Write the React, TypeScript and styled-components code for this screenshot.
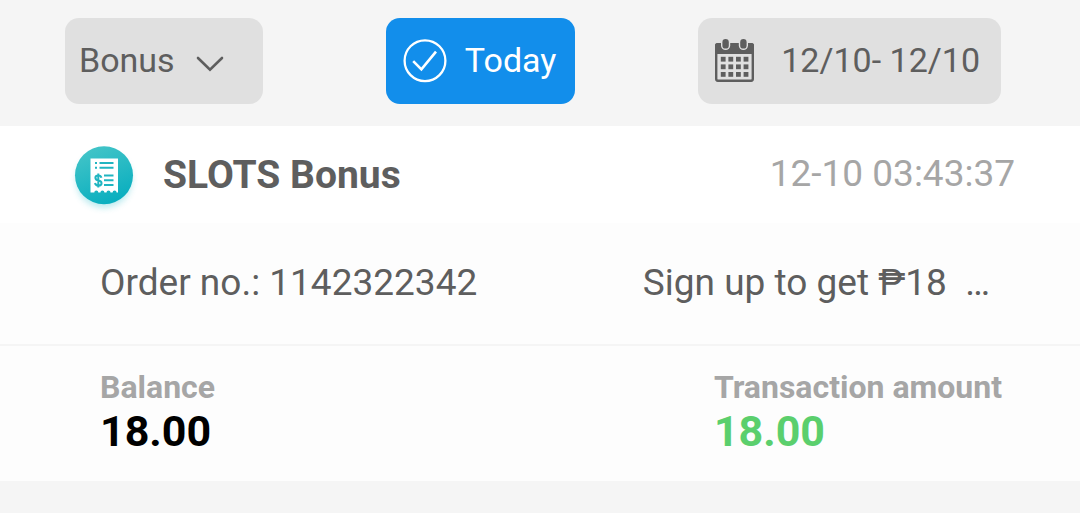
import React from "react";
import styled, { createGlobalStyle } from "styled-components";

const GlobalStyle = createGlobalStyle`
  *, *::before, *::after { box-sizing: border-box; }
  body {
    margin: 0;
    background: #f5f5f5;
    color: #5e5e5e;
    font-family: Roboto, "Liberation Sans", sans-serif;
  }
  button, select { font: inherit; color: inherit; }
  h2, p, dl, dd { margin: 0; }
`;

const Filters = styled.form`
  display: flex;
  justify-content: space-between;
  padding: 18px 79px 22px 65px;
  font-size: 34px;
  line-height: 42px;
`;

const SelectBox = styled.div`
  display: grid;
  align-items: center;
  width: 198px;
  height: 86px;
  border-radius: 14px;
  background: #e0e0e0;

  & > * { grid-area: 1 / 1; }
  & > svg {
    justify-self: end;
    margin-right: 39px;
    margin-top: 6px;
    pointer-events: none;
  }
`;

const Select = styled.select`
  appearance: none;
  width: 100%;
  height: 100%;
  padding: 0 0 2px 14px;
  border: 0;
  border-radius: 14px;
  background: transparent;
`;

const FilterButton = styled.button<{ $active?: boolean; $gap: number; $end: number }>`
  display: flex;
  align-items: center;
  gap: ${(p) => p.$gap}px;
  height: 86px;
  padding: 0 ${(p) => p.$end}px 0 17px;
  border: 0;
  border-radius: 14px;
  background: ${(p) => (p.$active ? "#128eeb" : "#e0e0e0")};
  color: ${(p) => (p.$active ? "#ffffff" : "inherit")};
  white-space: nowrap;
`;

const ButtonText = styled.span`
  padding-bottom: 2px;
`;

const Record = styled.article`
  background: #fdfdfd;
`;

const RecordHeader = styled.header`
  display: flex;
  align-items: center;
  height: 97px;
  padding: 0 65px;
  background: #ffffff;
`;

const Title = styled.h2`
  flex: 1;
  margin-left: 20px;
  font-size: 39px;
  font-weight: 700;
  line-height: 44px;
`;

const Time = styled.time`
  padding-bottom: 2px;
  color: #a6a6a6;
  font-size: 37px;
  line-height: 44px;
`;

const Details = styled.div`
  display: flex;
  justify-content: space-between;
  padding: 38px 90px 39px 100px;
  border-bottom: 2px solid #f5f5f5;
  font-size: 37px;
  line-height: 44px;
`;

const Note = styled.p`
  white-space: pre;
`;

const Amounts = styled.dl`
  display: flex;
  justify-content: space-between;
  padding: 21px 78px 26px 100px;
`;

const AmountLabel = styled.dt`
  color: #a6a6a6;
  font-size: 32px;
  font-weight: 700;
  line-height: 40px;
`;

const AmountValue = styled.dd<{ $credit?: boolean }>`
  color: ${(p) => (p.$credit ? "#5bcf6d" : "#000000")};
  font-size: 43px;
  font-weight: 700;
  line-height: 48px;
`;

const Chevron = () => (
  <svg width="28" height="16" viewBox="0 0 28 16" fill="none" stroke="#5e5e5e" strokeWidth="2.6" strokeLinecap="round" aria-hidden="true">
    <path d="M2 2 14 13.8 26 2" />
  </svg>
);

const CheckCircle = () => (
  <svg width="44" height="44" viewBox="0 0 44 44" fill="none" stroke="#fff" strokeWidth="2.3" aria-hidden="true">
    <circle cx="22" cy="21.7" r="20.4" />
    <path d="M10.2 22.2 18.4 30.4 33 12.7" strokeWidth="2.6" />
  </svg>
);

const cells = [0, 1, 2].flatMap((r) => [0, 1, 2, 3].map((c) => [r, c]));

const CalendarIcon = () => (
  <svg width="39" height="44" viewBox="0 0 39 44" aria-hidden="true">
    <rect x="1.2" y="5.3" width="36.6" height="36.4" rx="1.6" fill="none" stroke="#5e5e5e" strokeWidth="2.4" />
    <path d="M0 15V6.5Q0 4 2.5 4h34Q39 4 39 6.5V15z" fill="#5e5e5e" />
    {[10.6, 28.4].map((x) => (
      <g key={x}>
        <rect x={x - 4.6} y="-1.4" width="9.2" height="12.4" rx="4.6" fill="#e0e0e0" />
        <rect x={x - 3.2} y="0" width="6.4" height="9.6" rx="3.2" fill="#5e5e5e" />
      </g>
    ))}
    {cells.map(([r, c]) => (
      <rect key={`${r}-${c}`} x={5.8 + c * 7.6} y={17.8 + r * 7.6} width="4.8" height="4.8" fill="#5e5e5e" />
    ))}
  </svg>
);

const ReceiptIcon = () => (
  <svg width="78" height="78" viewBox="0 0 78 78" aria-hidden="true">
    <defs>
      <linearGradient id="badge" x1="0.2" y1="0" x2="0.6" y2="1">
        <stop offset="0" stopColor="#45c5c8" />
        <stop offset="1" stopColor="#08aebf" />
      </linearGradient>
      <filter id="glow" x="-30%" y="-30%" width="160%" height="160%">
        <feGaussianBlur stdDeviation="3" />
      </filter>
    </defs>
    <circle cx="39" cy="44" r="28" fill="#3cc4d0" opacity="0.35" filter="url(#glow)" />
    <circle cx="39" cy="39.3" r="29" fill="url(#badge)" />
    <path
      d="M25.5 22.5h27.5v34h-1.4a2 2 0 0 0-4 0h-2.1a2 2 0 0 0-4 0h-2.1a2 2 0 0 0-4 0h-2.1a2 2 0 0 0-4 0h-3.8z"
      fill="#fff"
    />
    <g fill="none" stroke="#20b5c1" strokeWidth="2">
      <path d="M30 27h2M34.5 27h14M30 31.8h2M34.5 31.8h14M39 39.5h9.5M39 44.3h9.5M39 49.1h9.5" />
      <path d="M36.4 41.8c-.4-1.6-1.5-2.2-3-2.2-4 0-4 4.2 0 4.8 4.2.5 4.2 5.2 0 5.2-1.9 0-3-.8-3.4-2.6M33.3 37.6v14" />
    </g>
  </svg>
);

export default function App() {
  return (
    <>
      <GlobalStyle />
      <main>
        <Filters onSubmit={(e) => e.preventDefault()}>
          <SelectBox>
            <Select aria-label="Transaction type" defaultValue="bonus">
              <option value="bonus">Bonus</option>
            </Select>
            <Chevron />
          </SelectBox>
          <FilterButton type="button" $active $gap={18} $end={19} aria-pressed="true">
            <CheckCircle />
            <ButtonText>Today</ButtonText>
          </FilterButton>
          <FilterButton type="button" $gap={27} $end={21}>
            <CalendarIcon />
            <ButtonText>12/10- 12/10</ButtonText>
          </FilterButton>
        </Filters>
        <Record>
          <RecordHeader>
            <ReceiptIcon />
            <Title>SLOTS Bonus</Title>
            <Time>12-10 03:43:37</Time>
          </RecordHeader>
          <Details>
            <p>Order no.: 1142322342</p>
            <Note>{"Sign up to get ₱18  …"}</Note>
          </Details>
          <Amounts>
            <div>
              <AmountLabel>Balance</AmountLabel>
              <AmountValue>18.00</AmountValue>
            </div>
            <div>
              <AmountLabel>Transaction amount</AmountLabel>
              <AmountValue $credit>18.00</AmountValue>
            </div>
          </Amounts>
        </Record>
      </main>
    </>
  );
}
